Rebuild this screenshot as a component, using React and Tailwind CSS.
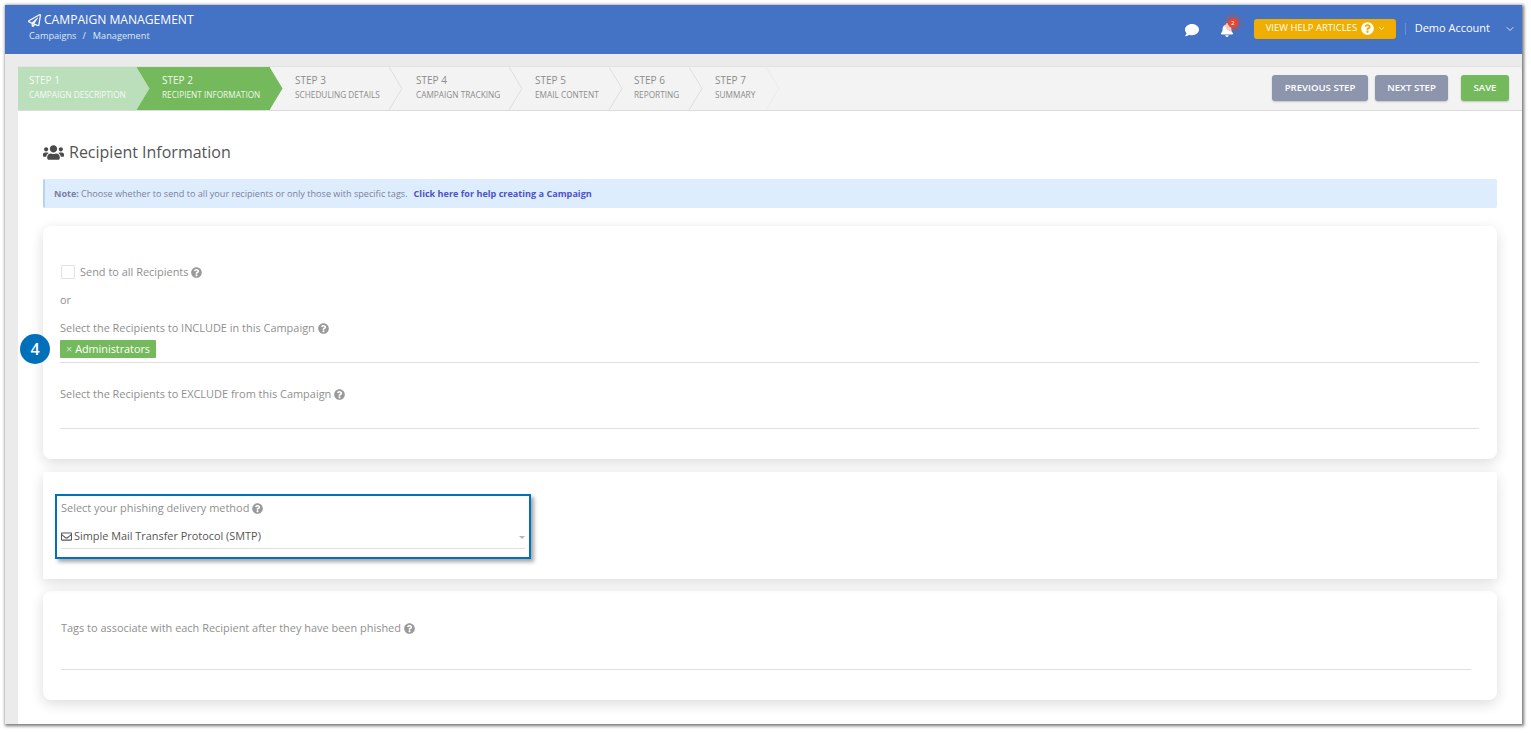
import React from "react";
import {
  FaBell,
  FaComment,
  FaQuestionCircle,
  FaRegEnvelope,
  FaRegPaperPlane,
  FaUsers,
} from "react-icons/fa";
import { FiChevronDown } from "react-icons/fi";

function Chevron({ fill, stroke }) {
  return (
    <svg
      className="absolute left-full top-0 z-10 -ml-px"
      width="14"
      height="43"
      viewBox="0 0 14 43"
    >
      <path d="M0 0 L13 21.5 L0 43" fill={fill} stroke={stroke} />
    </svg>
  );
}

function Step({ className, textClass, title, label, fill, stroke }) {
  return (
    <div className={`relative flex h-full flex-col ${className}`}>
      <span className={`mt-[6px] text-[10px] leading-[14px] ${textClass}`}>{title}</span>
      <span className={`mt-[2px] text-[8.25px] leading-[12px] whitespace-nowrap ${textClass}`}>{label}</span>
      <Chevron fill={fill} stroke={stroke} />
    </div>
  );
}

function Help() {
  return <FaQuestionCircle className="ml-[3px] inline-block text-[11px] text-[#9a9a9a]" />;
}

function Label({ children }) {
  return (
    <div className="flex h-4 items-center text-[10.95px] leading-4 text-[#8f8f8f]">
      {children}
      <Help />
    </div>
  );
}

export default function App() {
  return (
    <div className="min-h-[733px] bg-white p-[5px] font-['Open_Sans',sans-serif]">
      <div className="flex h-[719px] w-[1517px] flex-col overflow-hidden bg-[#ebebeb] shadow-[1px_1px_3px_1px_#777]">
        <header className="flex h-[49px] shrink-0 items-center justify-between bg-[#4472c4] pb-[2px] pl-[23px] pr-[5px] text-white">
          <div className="self-start pt-[7px]">
            <div className="flex items-center gap-[3px] text-[12.1px] leading-4">
              <FaRegPaperPlane className="text-[13px]" />
              CAMPAIGN MANAGEMENT
            </div>
            <div className="ml-px mt-[2px] flex text-[9.2px] leading-3 font-medium text-[#dfe8f8]">
              <span>Campaigns</span>
              <span className="ml-[6px]">/</span>
              <span className="ml-[7px]">Management</span>
            </div>
          </div>
          <div className="flex items-center">
            <FaComment className="mt-[2px] text-[14px]" />
            <div className="relative ml-[21px] mr-[20px] mt-[2px]">
              <FaBell className="text-[14px]" />
              <span className="absolute -right-[4px] -top-[5px] flex h-[10px] w-[10px] items-center justify-center rounded-full bg-[#e5482f] text-[6px] leading-none shadow-[0_0_0_4px_rgba(229,72,47,0.28)]">
                2
              </span>
            </div>
            <div className="flex h-5 w-[142px] items-center justify-start rounded-[3px] bg-[#f0ae00] pl-[12px] text-[9.5px]">
              VIEW HELP ARTICLES
              <FaQuestionCircle className="ml-[4px] text-[13px]" />
              <FiChevronDown className="ml-[3px] text-[9px]" />
            </div>
            <div className="ml-[9px] h-[12px] w-px bg-[#6c90d2]" />
            <span className="ml-[9px] text-[11px]">Demo Account</span>
            <FiChevronDown className="ml-[14px] mr-px text-[12px] text-[#d7e2f5]" />
          </div>
        </header>

        <div className="ml-[13px] mt-[13px] flex min-h-0 flex-1 flex-col bg-white">
          <div className="flex h-[44px] shrink-0 items-center justify-between rounded-tr-[4px] border-b border-[#dcdcdc] bg-[#f3f3f3] pr-[13px] shadow-[0_-1px_0_#e2e2e2]">
            <div className="flex h-[43px]">
              <Step
                className="z-[7] w-[119px] bg-[#bbdfba] pl-[11px]"
                textClass="text-[#f4fbf2]"
                title="STEP 1"
                label="CAMPAIGN DESCRIPTION"
                fill="#bbdfba"
                stroke="#bbdfba"
              />
              <Step
                className="z-[6] w-[133px] bg-[#74b95b] pl-[25px]"
                textClass="text-[#f1f9ee]"
                title="STEP 2"
                label="RECIPIENT INFORMATION"
                fill="#74b95b"
                stroke="#74b95b"
              />
              <Step
                className="z-[5] w-[120px] pl-[25px]"
                textClass="text-[#8c8c8c]"
                title="STEP 3"
                label="SCHEDULING DETAILS"
                fill="#f3f3f3"
                stroke="#dedede"
              />
              <Step
                className="z-[4] w-[120px] pl-[26px]"
                textClass="text-[#8c8c8c]"
                title="STEP 4"
                label="CAMPAIGN TRACKING"
                fill="#f3f3f3"
                stroke="#dedede"
              />
              <Step
                className="z-[3] w-[100px] pl-[25px]"
                textClass="text-[#8c8c8c]"
                title="STEP 5"
                label="EMAIL CONTENT"
                fill="#f3f3f3"
                stroke="#dedede"
              />
              <Step
                className="z-[2] w-[80px] pl-[24px]"
                textClass="text-[#8c8c8c]"
                title="STEP 6"
                label="REPORTING"
                fill="#f3f3f3"
                stroke="#dedede"
              />
              <Step
                className="z-[1] w-[77px] pl-[25px]"
                textClass="text-[#8c8c8c]"
                title="STEP 7"
                label="SUMMARY"
                fill="#f3f3f3"
                stroke="#ececec"
              />
            </div>
            <div className="mb-[1px] flex items-center text-[9.6px] font-semibold text-white">
              <button className="h-[26px] w-[96px] rounded-[3px] bg-[#8d95ad] shadow-[0_1px_2px_rgba(0,0,0,0.2)]">
                PREVIOUS STEP
              </button>
              <button className="ml-[7px] h-[26px] w-[73px] rounded-[3px] bg-[#8d95ad] shadow-[0_1px_2px_rgba(0,0,0,0.2)]">
                NEXT STEP
              </button>
              <button className="ml-[13px] h-[26px] w-[48px] rounded-[3px] bg-[#74b95b] shadow-[0_1px_2px_rgba(0,0,0,0.2)]">
                SAVE
              </button>
            </div>
          </div>

          <main className="px-[25px]">
            <h1 className="mt-[29px] flex h-6 items-center gap-[5px] text-[16px] font-normal text-[#555]">
              <FaUsers className="text-[21px] text-[#4a4a4a]" />
              Recipient Information
            </h1>

            <div className="mt-[15px] flex h-[29px] items-center rounded-[2px] border-l-[2px] border-[#b5d2f7] bg-[#deedfd] pl-[9px] text-[9.1px] text-[#7b7f9e]">
              <b className="font-bold">Note:</b>
              <span className="ml-[2px]">
                Choose whether to send to all your recipients or only those with specific tags.
              </span>
              <a className="ml-[6px] font-bold text-[#5052c8]">Click here for help creating a Campaign</a>
            </div>

            <section className="relative mt-[18px] h-[233px] rounded-[8px] bg-white pl-[17px] pr-[18px] pt-[38px] shadow-[0_4px_14px_rgba(0,0,0,0.14)]">
              <div className="flex h-4 items-center text-[10.95px] text-[#8f8f8f]">
                <span className="ml-px mr-[5px] h-[14px] w-[14px] rounded-[1px] border border-[#e2e2e2] bg-white" />
                Send to all Recipients
                <Help />
              </div>
              <div className="mt-3 h-4 text-[10.95px] leading-4 text-[#8f8f8f]">or</div>
              <div className="mt-3">
                <Label>Select the Recipients to INCLUDE in this Campaign</Label>
              </div>
              <div className="flex h-[27px] items-start border-b border-[#dfdfdf] pt-[4px]">
                <span className="flex h-[18px] w-[96px] items-center rounded-[1px] bg-[#74b95b] pl-[6px] text-[10.8px] text-white">
                  <span className="mr-[3px] text-[#cfe5c6]">×</span>
                  Administrators
                </span>
              </div>
              <div className="mt-[23px]">
                <Label>Select the Recipients to EXCLUDE from this Campaign</Label>
              </div>
              <div className="h-[27px] border-b border-[#dfdfdf]" />
              <div className="absolute -left-[23px] top-[108px] flex h-[30px] w-[30px] items-center justify-center rounded-full bg-[#0070ba] text-[16px] font-semibold text-white">
                4
              </div>
            </section>

            <section className="relative mt-[13px] h-[107px] rounded-[2px] bg-white pl-[18px] pt-[28px] shadow-[0_4px_14px_rgba(0,0,0,0.14)]">
              <Label>Select your phishing delivery method</Label>
              <div className="mt-[10px] flex h-[23px] w-[464px] items-center justify-between border-b border-[#dfdfdf] pb-[1px] text-[10.9px] text-[#555]">
                <span className="flex items-center gap-[2px]">
                  <FaRegEnvelope className="text-[11px]" />
                  Simple Mail Transfer Protocol (SMTP)
                </span>
                <span className="mt-[2px] h-0 w-0 border-x-[3px] border-t-[3px] border-x-transparent border-t-[#b5b5b5]" />
              </div>
              <div className="absolute left-[12px] top-[22px] h-[65px] w-[476px] border-2 border-[#0070c0] shadow-[3px_3px_4px_rgba(0,0,0,0.35)]" />
            </section>

            <section className="mt-[12px] h-[109px] rounded-[8px] bg-white pl-[18px] pr-[26px] pt-[29px] shadow-[0_4px_14px_rgba(0,0,0,0.14)]">
              <Label>Tags to associate with each Recipient after they have been phished</Label>
              <div className="h-[34px] border-b border-[#dfdfdf]" />
            </section>
          </main>
        </div>
      </div>
    </div>
  );
}
